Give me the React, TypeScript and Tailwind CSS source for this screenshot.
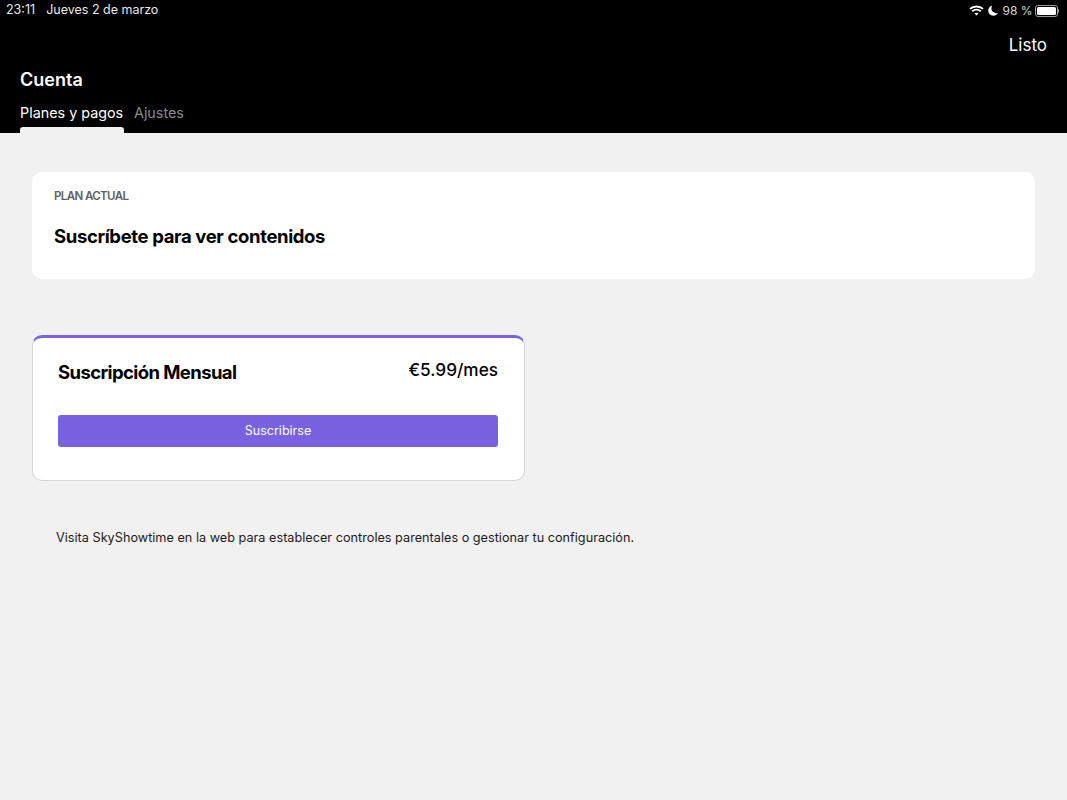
function StatusIcons() {
  return (
    <div className="flex items-center">
      {/* wifi */}
      <svg width="15" height="11" viewBox="0 0 15 11" className="mr-[4px]" fill="none" stroke="#fff" strokeWidth="1.9">
        <path d="M1 3.9C4.6 .6 10.4 .6 14 3.9" />
        <path d="M3.3 6.2C5.6 4.1 9.4 4.1 11.7 6.2" />
        <path d="M7.5 10.6 5.4 8.4C6.5 7.5 8.5 7.5 9.6 8.4Z" fill="#fff" stroke="none" />
      </svg>
      {/* moon */}
      <svg width="10" height="11" viewBox="0 0 10 11" className="mr-[4px]">
        <path d="M4.2.4C1.8 1 .2 3.100 .2 5.500c0 2.900 2.300 5.200 5.200 5.200 1.900 0 3.500-1 4.400-2.500C6.300 8.600 3 6.100 3.400 3c.1-1 .4-1.900.8-2.600Z" fill="#fff" />
      </svg>
      <span className="text-[12px] leading-none text-[#d8d8d8] mr-[2px]">98 %</span>
      {/* battery */}
      <div className="flex items-center">
        <div className="w-[23px] h-[12px] rounded-[3px] border border-[#9a9a9a] p-[1px]">
          <div className="w-full h-full rounded-[1.5px] bg-white" />
        </div>
        <div className="w-[1.500px] h-[4px] rounded-r-sm bg-[#9a9a9a]" />
      </div>
    </div>
  );
}

export default function App() {
  return (
    <div className="min-h-[800px] bg-[#f1f1f1] font-['Inter',sans-serif]">
      <header className="h-[133px] bg-black text-white flex flex-col">
        <div className="h-[19px] mt-[1px] flex items-center justify-between pl-[6px] pr-[8px] text-[12.5px] text-[#e8e8e8]">
          <div className="flex gap-[11px]">
            <span>23:11</span>
            <span>Jueves 2 de marzo</span>
          </div>
          <StatusIcons />
        </div>
        <div className="flex justify-end pr-[20px] pt-[14px] text-[17px] leading-[22px]">Listo</div>
        <h1 className="pl-[20px] pt-[12px] text-[18px] leading-[24px] font-semibold">Cuenta</h1>
        <div className="mt-auto flex gap-[10px] pl-[20px]">
          <div className="flex flex-col w-[104px]">
            <span className="text-[14.35px] leading-[20px] mb-[4px]">Planes y pagos</span>
            <div className="h-[6px] rounded-t-[3px] bg-[#f1f1f1]" />
          </div>
          <span className="text-[14.35px] leading-[20px] text-[#8a8a8a]">Ajustes</span>
        </div>
      </header>

      <main className="pt-[39px] px-[32px]">
        <section className="h-[107px] rounded-[10px] bg-white pl-[22px] pt-[16px]">
          <div className="text-[11.5px] leading-[16px] font-semibold text-[#5f5f5f] tracking-[-0.6px]">PLAN ACTUAL</div>
          <h2 className="mt-[19px] text-[18.500px] leading-[26px] font-bold text-black tracking-[-0.37px]">Suscríbete para ver contenidos</h2>
        </section>

        <section className="mt-[56px] w-[493px] h-[146px] rounded-[10px] bg-white border border-[#d6d6d6] border-t-[3px] border-t-[#7a62e2] pl-[25px] pr-[26px]">
          <div className="flex justify-between items-start pt-[20px]">
            <h3 className="text-[18.500px] leading-[28px] font-bold text-black tracking-[-0.6px]">Suscripción Mensual</h3>
            <span className="mt-[1px] text-[17.2px] leading-[22px] font-medium text-black">€5.99/mes</span>
          </div>
          <button className="mt-[29px] w-[440px] h-[32px] rounded-[3px] bg-[#7962e0] text-white text-[12.5px]">Suscribirse</button>
        </section>

        <p className="mt-[48px] pl-[24px] text-[12.7px] leading-[18px] text-[#1c1c1c]">
          Visita SkyShowtime en la web para establecer controles parentales o gestionar tu configuración.
        </p>
      </main>
    </div>
  );
}
